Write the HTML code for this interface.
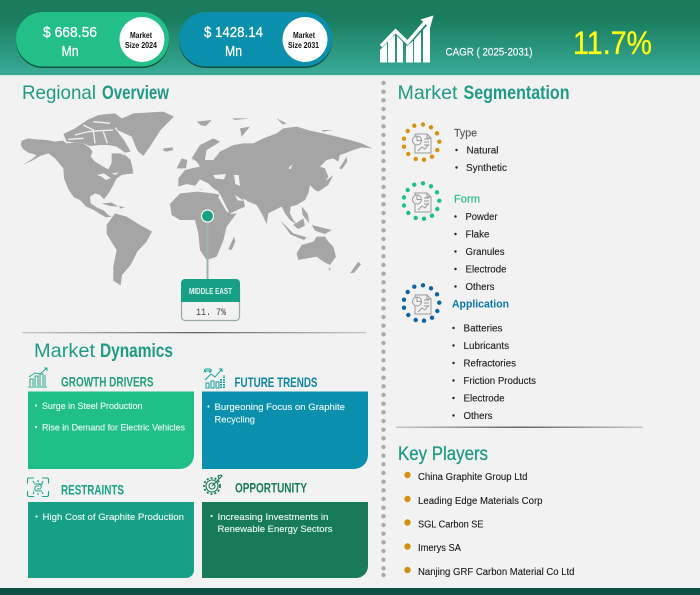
<!DOCTYPE html>
<html><head><meta charset="utf-8"><style>
html,body{margin:0;padding:0;background:#f2f2f2}
svg{display:block}
text{font-family:"Liberation Sans",sans-serif}
.li{font-size:10px;fill:#1c1c1c;stroke:#1c1c1c;stroke-width:.12px}
.cw{font-size:9.5px;fill:#eafaf5;stroke:#eafaf5;stroke-width:.12px}
.kp{font-size:10px;fill:#1c1c1c;stroke:#1c1c1c;stroke-width:.12px}
</style></head><body>
<svg width="700" height="595" viewBox="0 0 700 595" xmlns="http://www.w3.org/2000/svg">
<defs>
<linearGradient id="hd" x1="0" y1="0" x2="0" y2="1"><stop offset="0" stop-color="#1a7a5a"/><stop offset=".25" stop-color="#1a7d5e"/><stop offset="1" stop-color="#38ab97"/></linearGradient>
<linearGradient id="dv" x1="0" y1="0" x2="1" y2="0"><stop offset="0" stop-color="#c4c8c6"/><stop offset=".5" stop-color="#666"/><stop offset="1" stop-color="#c4c8c6"/></linearGradient>
</defs>
<rect width="700" height="595" fill="#f2f2f2"/>
<rect width="700" height="75" fill="url(#hd)"/>
<rect y="75" width="700" height="1.500" fill="#d5ebe5"/>
<rect y="588" width="700" height="7" fill="#0f5044"/>

<!-- pills -->
<rect x="16" y="14" width="153" height="54" rx="27" fill="#14513f"/>
<rect x="16" y="12" width="153" height="54.500" rx="27" fill="#22bf89"/>
<circle cx="142" cy="39.500" r="22.500" fill="#fff"/>
<rect x="179" y="14" width="153" height="54" rx="27" fill="#14513f"/>
<rect x="179" y="12" width="153" height="54.500" rx="27" fill="#0a8fad"/>
<circle cx="305" cy="39.500" r="22.500" fill="#fff"/>
<g font-size="15" fill="#fff" stroke="#fff" stroke-width=".25">
<text x="43" y="37" textLength="54" lengthAdjust="spacingAndGlyphs">$ 668.56</text>
<text x="61.500" y="56" textLength="17" lengthAdjust="spacingAndGlyphs">Mn</text>
<text x="204" y="37" textLength="59" lengthAdjust="spacingAndGlyphs">$ 1428.14</text>
<text x="225" y="56" textLength="17" lengthAdjust="spacingAndGlyphs">Mn</text>
</g>
<text x="130" y="38" font-size="8" font-weight="bold" fill="#111" textLength="22" lengthAdjust="spacingAndGlyphs">Market</text>
<text x="125" y="48" font-size="8" font-weight="bold" fill="#111" textLength="32" lengthAdjust="spacingAndGlyphs">Size 2024</text>
<text x="293" y="38" font-size="8" font-weight="bold" fill="#111" textLength="22" lengthAdjust="spacingAndGlyphs">Market</text>
<text x="288" y="48" font-size="8" font-weight="bold" fill="#111" textLength="31" lengthAdjust="spacingAndGlyphs">Size 2031</text>

<!-- growth icon -->
<g fill="#fff">
<path d="M380 50l7-7v19.500h-7zM388 41l7-6v27.500h-7zM397 36l6 6v20.500h-6zM406 45l1 1 6-5v21.500h-7zM414 40l7-8v30.500h-7zM423 30l7-8v40.500h-7z"/>
</g>
<path d="M381 46l14.500-15 12 11.500L427 20" fill="none" stroke="#fff" stroke-width="3.500"/>
<path d="M433.500 15.500l-13 4 9.500 8.500z" fill="#fff"/>
<text x="445.500" y="55.500" font-size="11" fill="#fff" stroke="#fff" stroke-width=".15" textLength="87" lengthAdjust="spacingAndGlyphs">CAGR ( 2025-2031)</text>
<text x="573" y="54" font-size="32" fill="#ffff14" stroke="#ffff14" stroke-width=".3" textLength="79" lengthAdjust="spacingAndGlyphs">11.7%</text>

<!-- headings -->
<g font-size="19.500" fill="#1f9b84">
<text x="22" y="99" textLength="74" lengthAdjust="spacingAndGlyphs">Regional</text>
<text x="102" y="99" font-weight="bold" textLength="67" lengthAdjust="spacingAndGlyphs">Overview</text>
<text x="397.500" y="99" textLength="60" lengthAdjust="spacingAndGlyphs">Market</text>
<text x="463.500" y="99" font-weight="bold" textLength="106" lengthAdjust="spacingAndGlyphs">Segmentation</text>
<text x="34" y="357" textLength="61" lengthAdjust="spacingAndGlyphs">Market</text>
<text x="100" y="357" font-weight="bold" textLength="73" lengthAdjust="spacingAndGlyphs">Dynamics</text>
<text x="398" y="460" stroke="#1f9b84" stroke-width=".3" textLength="90" lengthAdjust="spacingAndGlyphs">Key Players</text>
</g>

<!-- dotted divider -->
<g fill="#aaaaaa">
<circle cx="383.500" cy="83" r="2.200"/><circle cx="383.500" cy="91.700" r="2.200"/><circle cx="383.500" cy="100.300" r="2.200"/><circle cx="383.500" cy="109" r="2.200"/><circle cx="383.500" cy="117.700" r="2.200"/><circle cx="383.500" cy="126.300" r="2.200"/><circle cx="383.500" cy="135" r="2.200"/><circle cx="383.500" cy="143.700" r="2.200"/><circle cx="383.500" cy="152.300" r="2.200"/><circle cx="383.500" cy="161" r="2.200"/><circle cx="383.500" cy="169.700" r="2.200"/><circle cx="383.500" cy="178.300" r="2.200"/><circle cx="383.500" cy="187" r="2.200"/><circle cx="383.500" cy="195.700" r="2.200"/><circle cx="383.500" cy="204.300" r="2.200"/><circle cx="383.500" cy="213" r="2.200"/><circle cx="383.500" cy="221.700" r="2.200"/><circle cx="383.500" cy="230.300" r="2.200"/><circle cx="383.500" cy="239" r="2.200"/><circle cx="383.500" cy="247.700" r="2.200"/><circle cx="383.500" cy="256.300" r="2.200"/><circle cx="383.500" cy="265" r="2.200"/><circle cx="383.500" cy="273.700" r="2.200"/><circle cx="383.500" cy="282.300" r="2.200"/><circle cx="383.500" cy="291" r="2.200"/><circle cx="383.500" cy="299.700" r="2.200"/><circle cx="383.500" cy="308.300" r="2.200"/><circle cx="383.500" cy="317" r="2.200"/><circle cx="383.500" cy="325.700" r="2.200"/><circle cx="383.500" cy="334.300" r="2.200"/><circle cx="383.500" cy="343" r="2.200"/><circle cx="383.500" cy="351.700" r="2.200"/><circle cx="383.500" cy="360.300" r="2.200"/><circle cx="383.500" cy="369" r="2.200"/><circle cx="383.500" cy="377.700" r="2.200"/><circle cx="383.500" cy="386.300" r="2.200"/><circle cx="383.500" cy="395" r="2.200"/><circle cx="383.500" cy="403.700" r="2.200"/><circle cx="383.500" cy="412.300" r="2.200"/><circle cx="383.500" cy="421" r="2.200"/><circle cx="383.500" cy="429.700" r="2.200"/><circle cx="383.500" cy="438.300" r="2.200"/><circle cx="383.500" cy="447" r="2.200"/><circle cx="383.500" cy="455.700" r="2.200"/><circle cx="383.500" cy="464.300" r="2.200"/><circle cx="383.500" cy="473" r="2.200"/><circle cx="383.500" cy="481.700" r="2.200"/><circle cx="383.500" cy="490.300" r="2.200"/><circle cx="383.500" cy="499" r="2.200"/><circle cx="383.500" cy="507.700" r="2.200"/><circle cx="383.500" cy="516.300" r="2.200"/><circle cx="383.500" cy="525" r="2.200"/><circle cx="383.500" cy="533.700" r="2.200"/><circle cx="383.500" cy="542.300" r="2.200"/><circle cx="383.500" cy="551" r="2.200"/><circle cx="383.500" cy="559.700" r="2.200"/><circle cx="383.500" cy="568.300" r="2.200"/><circle cx="383.500" cy="575" r="2.200"/>
</g>

<!-- world map -->
<g transform="translate(0 110) scale(.3333)" fill="#a5a5a5">
<!-- North America -->
<path d="M65 92 85 85 110 88 140 90 165 95 188 92 200 100 225 98 250 100 268 112 278 125 272 140 285 155 310 170 325 178 332 165 340 145 362 150 375 165 388 178 402 190 385 192 365 195 350 205 340 225 332 240 320 258 312 268 300 255 285 250 270 260 272 280 290 292 312 302 325 315 335 320 318 322 300 312 278 298 258 290 240 270 222 262 205 238 192 205 190 175 165 145 145 130 120 138 100 150 68 165 95 148 110 135 85 128 70 118 62 105z"/>
<!-- Quebec -->
<path d="M335 130 370 130 392 150 400 185 360 185 335 170z"/>
<!-- Arctic islands mass -->
<path d="M190 72 225 55 262 30 295 15 345 10 372 30 345 55 372 90 392 125 375 128 350 110 325 105 300 105 270 108 250 100 200 95z"/>
<g fill="none" stroke="#f2f2f2" stroke-width="4">
<path d="M225 75 265 65 300 62 340 60"/>
<path d="M250 45 280 60 285 100"/>
<path d="M310 65 322 100"/>
<path d="M205 88 250 85"/>
<path d="M280 35 330 40"/>
<path d="M340 112 372 135"/>
</g>
<path d="M282 125 300 120 325 130 330 160 322 172 300 155z" fill="#f2f2f2"/>
<path d="M290 195 312 190 332 204 318 210 305 200zM335 190l20-3-8 8z" fill="#f2f2f2"/>
<!-- Cuba / Caribbean -->
<path d="M305 280 335 278 355 290 330 288zM358 288 375 292 360 296z"/>
<!-- Greenland -->
<path d="M345 35 400 10 490 5 522 20 482 60 450 110 430 138 412 122 395 80 352 60z"/>
<!-- Iceland, Svalbard -->
<path d="M490 115 518 112 520 120 500 125 490 122zM590 35 635 30 618 48 603 46z"/>
<!-- South America -->
<path d="M320 345 345 310 380 320 420 345 456 365 440 395 412 425 392 465 366 495 362 526 340 512 340 470 350 420 320 372z"/>
<!-- Africa -->
<path d="M510 282 540 250 592 245 640 250 660 255 690 312 710 310 680 350 670 392 650 440 620 450 600 420 595 370 585 330 540 330 515 315z"/>
<!-- Eurasia -->
<path d="M535 205 555 180 575 175 600 170 590 155 575 145 600 105 640 85 660 95 645 105 620 120 615 150 640 150 660 125 700 105 730 100 760 100 790 85 830 70 850 55 890 50 930 62 970 70 1010 80 1050 90 1085 100 1118 115 1085 112 1060 120 1035 130 1020 135 1015 155 1000 145 980 150 960 170 975 175 985 200 970 225 945 240 930 225 925 250 915 270 890 285 872 290 870 310 880 330 892 345 870 330 855 310 845 290 825 300 805 310 800 342 785 310 770 285 745 275 730 265 735 290 712 300 682 315 668 270 655 245 640 235 600 240 590 228 560 222 535 230z"/>
<!-- islands -->
<path d="M685 418 702 380 706 395 695 420zM1018 175 1040 140 1042 155 1025 178zM945 240 975 215 1000 195 985 225 955 245zM530 175 545 145 562 150 558 175zM720 55 750 50 725 80zM840 330 880 370 920 382 912 390 872 374zM880 345 910 325 915 347 895 357zM935 345 995 360 975 372 945 362zM905 290 923 310 928 340 908 315zM890 430 905 405 940 395 950 380 975 380 985 395 1000 410 1008 440 990 465 970 455 950 440 920 445 895 450zM1050 490 1075 455 1083 463 1063 488zM985 475h8l-3 7zM830 25 860 40 848 43zM965 60h35l-30 5zM695 25h55l-45 5z"/>
<g fill="#f2f2f2">
<path d="M585 228 600 208 625 220 645 240 600 238zM640 195 678 192 672 208 645 205zM702 195 716 195 720 228 706 222zM660 252 688 308 680 305 655 262zM865 175 877 163 872 178zM705 255 733 273 713 271z"/>
</g>
</g>
<rect x="22" y="332" width="344" height="1.300" fill="url(#dv)"/>
<rect x="206.500" y="220" width="2" height="60" fill="#9cb5ae"/>
<circle cx="207.500" cy="216" r="6" fill="#17a085" stroke="#fff" stroke-width="1.200"/>
<rect x="181.500" y="285" width="58" height="35.500" rx="3.500" fill="#f2f2f2" stroke="#98aaa5" stroke-width="1.200"/>
<path d="M181 302V283a4 4 0 0 1 4-4h51a4 4 0 0 1 4 4v19z" fill="#17a085"/>
<text x="189" y="294" font-size="8" font-weight="bold" fill="#e8f7f3" textLength="43" lengthAdjust="spacingAndGlyphs">MIDDLE EAST</text>
<text x="196" y="315" font-size="10" fill="#444" textLength="30" lengthAdjust="spacingAndGlyphs" style="font-family:'Liberation Mono',monospace">11. 7%</text>

<!-- segmentation icons -->
<g fill="#d4920f">
<circle cx="423" cy="124.500" r="2.200"/><circle cx="431" cy="127.300" r="2.200"/><circle cx="437" cy="133.300" r="2.200"/><circle cx="439.300" cy="141.700" r="2.200"/><circle cx="437.300" cy="150" r="2.200"/><circle cx="432" cy="156.700" r="2.200"/><circle cx="424" cy="159.700" r="2.200"/><circle cx="415.700" cy="159" r="2.200"/><circle cx="408.300" cy="154" r="2.200"/><circle cx="404" cy="146.700" r="2.200"/><circle cx="404" cy="138.700" r="2.200"/><circle cx="407.700" cy="131" r="2.200"/><circle cx="414.300" cy="125.700" r="2.200"/>
</g>
<g fill="#1dbf89">
<circle cx="423" cy="183.300" r="2.200"/><circle cx="431" cy="186.300" r="2.200"/><circle cx="437" cy="192.300" r="2.200"/><circle cx="439.300" cy="200.700" r="2.200"/><circle cx="437.300" cy="209" r="2.200"/><circle cx="432" cy="215.700" r="2.200"/><circle cx="424" cy="218.700" r="2.200"/><circle cx="415.700" cy="218" r="2.200"/><circle cx="408.300" cy="213" r="2.200"/><circle cx="404" cy="205.500" r="2.200"/><circle cx="404" cy="197.500" r="2.200"/><circle cx="407.700" cy="190" r="2.200"/><circle cx="414.300" cy="184.700" r="2.200"/>
</g>
<g fill="#0c64a5">
<circle cx="423" cy="285.300" r="2.200"/><circle cx="431" cy="288.300" r="2.200"/><circle cx="437" cy="294.300" r="2.200"/><circle cx="439.300" cy="302.700" r="2.200"/><circle cx="437.300" cy="311" r="2.200"/><circle cx="432" cy="317.700" r="2.200"/><circle cx="424" cy="320.700" r="2.200"/><circle cx="415.700" cy="320" r="2.200"/><circle cx="408.300" cy="315" r="2.200"/><circle cx="404" cy="307.700" r="2.200"/><circle cx="404" cy="299.700" r="2.200"/><circle cx="407.700" cy="292" r="2.200"/><circle cx="414.300" cy="286.700" r="2.200"/>
</g>
<g fill="none" stroke="#999" stroke-width="1">
<path d="M415 134h12l4 4v15h-16zM427 134v4h4"/><circle cx="417" cy="140.500" r="4.500" fill="#f2f2f2"/><path d="M417 136v4.500h4.500M424 139h5M424 142h5M424 145h5M418 151l4-4 3 2 4-5"/>
<path d="M415 193h12l4 4v15h-16zM427 193v4h4"/><circle cx="417" cy="199.500" r="4.500" fill="#f2f2f2"/><path d="M417 195v4.500h4.500M424 198h5M424 201h5M424 204h5M418 210l4-4 3 2 4-5"/>
<path d="M415 295h12l4 4v15h-16zM427 295v4h4"/><circle cx="417" cy="301.500" r="4.500" fill="#f2f2f2"/><path d="M417 297v4.500h4.500M424 300h5M424 303h5M424 306h5M418 312l4-4 3 2 4-5"/>
</g>

<!-- segmentation list -->
<text x="454" y="136.500" font-size="11" fill="#555" stroke="#555" stroke-width=".15" textLength="23" lengthAdjust="spacingAndGlyphs">Type</text>
<text x="454" y="202.500" font-size="11" fill="#20bf88" stroke="#20bf88" stroke-width=".15" textLength="26" lengthAdjust="spacingAndGlyphs">Form</text>
<text x="452" y="307.500" font-size="11" font-weight="bold" fill="#0a77a8" textLength="57" lengthAdjust="spacingAndGlyphs">Application</text>
<g fill="#222">
<circle cx="456.500" cy="150" r="1.200"/><circle cx="456.500" cy="167.500" r="1.200"/>
<circle cx="455.500" cy="216.500" r="1.200"/><circle cx="455.500" cy="234" r="1.200"/><circle cx="455.500" cy="251.500" r="1.200"/><circle cx="455.500" cy="269" r="1.200"/><circle cx="455.500" cy="286.500" r="1.200"/>
<circle cx="453.500" cy="328" r="1.200"/><circle cx="453.500" cy="345.500" r="1.200"/><circle cx="453.500" cy="363" r="1.200"/><circle cx="453.500" cy="380.500" r="1.200"/><circle cx="453.500" cy="398" r="1.200"/><circle cx="453.500" cy="415.500" r="1.200"/>
</g>
<text class="li" x="466.500" y="153.500" textLength="32" lengthAdjust="spacingAndGlyphs">Natural</text>
<text class="li" x="466" y="171" textLength="41" lengthAdjust="spacingAndGlyphs">Synthetic</text>
<text class="li" x="465.500" y="220" textLength="32" lengthAdjust="spacingAndGlyphs">Powder</text>
<text class="li" x="465.500" y="237.500" textLength="24" lengthAdjust="spacingAndGlyphs">Flake</text>
<text class="li" x="465.500" y="255" textLength="39" lengthAdjust="spacingAndGlyphs">Granules</text>
<text class="li" x="465.500" y="272.500" textLength="41" lengthAdjust="spacingAndGlyphs">Electrode</text>
<text class="li" x="465.500" y="290" textLength="29" lengthAdjust="spacingAndGlyphs">Others</text>
<text class="li" x="463.500" y="331.500" textLength="39" lengthAdjust="spacingAndGlyphs">Batteries</text>
<text class="li" x="463.500" y="349" textLength="45.500" lengthAdjust="spacingAndGlyphs">Lubricants</text>
<text class="li" x="463.500" y="366.500" textLength="52.500" lengthAdjust="spacingAndGlyphs">Refractories</text>
<text class="li" x="463.500" y="384" textLength="72.500" lengthAdjust="spacingAndGlyphs">Friction Products</text>
<text class="li" x="463.500" y="401.500" textLength="41" lengthAdjust="spacingAndGlyphs">Electrode</text>
<text class="li" x="463.500" y="419" textLength="29" lengthAdjust="spacingAndGlyphs">Others</text>
<rect x="396" y="426.500" width="247" height="1.500" fill="url(#dv)"/>

<!-- key players -->
<g fill="#d4900f">
<circle cx="407.500" cy="475" r="3.200"/><circle cx="407.500" cy="499" r="3.200"/><circle cx="407.500" cy="522.500" r="3.200"/><circle cx="407.500" cy="546.500" r="3.200"/><circle cx="407.500" cy="570" r="3.200"/>
</g>
<text class="kp" x="418" y="480" textLength="109.500" lengthAdjust="spacingAndGlyphs">China Graphite Group Ltd</text>
<text class="kp" x="418" y="504" textLength="124.500" lengthAdjust="spacingAndGlyphs">Leading Edge Materials Corp</text>
<text class="kp" x="418" y="527.500" textLength="65.500" lengthAdjust="spacingAndGlyphs">SGL Carbon SE</text>
<text class="kp" x="418" y="551" textLength="43" lengthAdjust="spacingAndGlyphs">Imerys SA</text>
<text class="kp" x="418" y="575" textLength="156.500" lengthAdjust="spacingAndGlyphs">Nanjing GRF Carbon Material Co Ltd</text>

<!-- dynamics cards -->
<path d="M28 391.500H194V455a14 14 0 0 1-14 14H28z" fill="#20bf88"/>
<path d="M202 391.500H368V455a14 14 0 0 1-14 14H202z" fill="#0a8fad"/>
<path d="M28 502H194V570a8 8 0 0 1-8 8H28z" fill="#17a085"/>
<path d="M202 502H368V566a12 12 0 0 1-12 12H202z" fill="#177a58"/>

<text x="61" y="386.500" font-size="14" font-weight="bold" fill="#1f9f7a" textLength="92.500" lengthAdjust="spacingAndGlyphs">GROWTH DRIVERS</text>
<text x="234.500" y="387" font-size="14" font-weight="bold" fill="#0f86a0" textLength="83" lengthAdjust="spacingAndGlyphs">FUTURE TRENDS</text>
<text x="61" y="494.500" font-size="14" font-weight="bold" fill="#17a085" textLength="63" lengthAdjust="spacingAndGlyphs">RESTRAINTS</text>
<text x="235" y="492.500" font-size="14" font-weight="bold" fill="#177a58" textLength="72" lengthAdjust="spacingAndGlyphs">OPPORTUNITY</text>

<g fill="#eafaf5">
<circle cx="36" cy="405.500" r="1.100"/><circle cx="36" cy="427" r="1.100"/><circle cx="208.500" cy="406.500" r="1.100"/><circle cx="36.500" cy="516.500" r="1.100"/><circle cx="211.500" cy="516" r="1.100"/>
</g>
<text class="cw" x="42" y="409" textLength="100.500" lengthAdjust="spacingAndGlyphs">Surge in Steel Production</text>
<text class="cw" x="42" y="430.500" textLength="143" lengthAdjust="spacingAndGlyphs">Rise in Demand for Electric Vehicles</text>
<text class="cw" x="214.500" y="410" textLength="130.500" lengthAdjust="spacingAndGlyphs">Burgeoning Focus on Graphite</text>
<text class="cw" x="214.500" y="422.500" textLength="40.500" lengthAdjust="spacingAndGlyphs">Recycling</text>
<text class="cw" x="42.500" y="520" textLength="141.500" lengthAdjust="spacingAndGlyphs">High Cost of Graphite Production</text>
<text class="cw" x="217.500" y="520" textLength="111" lengthAdjust="spacingAndGlyphs">Increasing Investments in</text>
<text class="cw" x="217.500" y="532" textLength="115" lengthAdjust="spacingAndGlyphs">Renewable Energy Sectors</text>

<!-- small icons -->
<g fill="none" stroke="#2aa98a" stroke-width="1">
<path d="M28 387h19M30 386v-7h3v7M35 386v-10h3v10M40 386v-12h3v12M45 386v-11"/>
<path d="M29 377l6-4 5 1 7-6M44 368h3v3"/>
</g>
<g fill="none" stroke="#17a0a0" stroke-width="1">
<path d="M206 388v-5h3v5zM211 388v-7h3v7zM216 388v-6h3v6z"/>
<path d="M205 380l6-6 4 3 7-8M219 369h3v3M205 371h6M209 372c3 0 3-3 0-3h-3c-2 0-2 3 0 3"/>
<path d="M221 388v-9M224 388v-13" stroke-dasharray="1.500 1" stroke-width="2"/>
</g>
<g fill="none" stroke="#1aa58a" stroke-width="1.100">
<path d="M34 478h-5a1.500 1.500 0 0 0-1.500 1.500v4M42 478h5a1.500 1.500 0 0 1 1.500 1.500v4M27.500 491v4a1.500 1.500 0 0 0 1.500 1.500h5M48.500 491v4a1.500 1.500 0 0 1-1.500 1.500h-5"/>
<path d="M34 484h5c3 0 3 5 0 5h-2M42 491h-5c-3 0-3-5 0-5h2M43 484h-1c-2 0-2 0-3 1M33 491h1"/>
<path d="M38 480v2M33 481l1 2M43 481l-1 2M38 493v2M33 494l1-2M43 494l-1-2"/>
</g>
<g fill="none" stroke="#177a58" stroke-width="1.100">
<circle cx="212" cy="486" r="3"/><circle cx="212" cy="486" r="6"/><circle cx="212" cy="486" r="8" stroke-dasharray="2 2" stroke-width="1.800"/>
<path d="M212 486l8-8M218 476l1 3 3-3-1-1z"/>
</g>
</svg>
</body></html>
